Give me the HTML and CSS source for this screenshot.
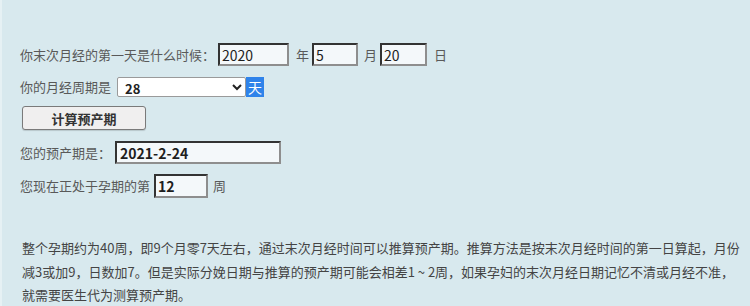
FILE: index.html
```html
<!DOCTYPE html>
<html lang="zh-CN">
<head>
<meta charset="utf-8">
<title>预产期计算</title>
<link rel="stylesheet" href="styles.css">
</head>
<body>
<div class="page">
  <div class="row row-date">
    <span class="label">你末次月经的第一天是什么时候：</span>
    <input class="field f-year" type="text" value="2020">
    <span class="unit u-year">年</span>
    <input class="field f-month" type="text" value="5">
    <span class="unit u-month">月</span>
    <input class="field f-day" type="text" value="20">
    <span class="unit u-day">日</span>
  </div>
  <div class="row row-cycle">
    <span class="label">你的月经周期是</span>
    <select class="cycle">
      <option>28</option>
    </select><span class="sel-unit">天</span>
  </div>
  <div class="row row-btn">
    <button class="calc" type="button">计算预产期</button>
  </div>
  <div class="row row-result">
    <span class="label">您的预产期是：</span>
    <input class="field f-result strong" type="text" value="2021-2-24">
  </div>
  <div class="row row-week">
    <span class="label">您现在正处于孕期的第</span>
    <input class="field f-week strong" type="text" value="12">
    <span class="unit u-week">周</span>
  </div>
  <p class="note">整个孕期约为40周，即9个月零7天左右，通过末次月经时间可以推算预产期。推算方法是按末次月经时间的第一日算起，月份减3或加9，日数加7。但是实际分娩日期与推算的预产期可能会相差1 ~ 2周，如果孕妇的末次月经日期记忆不清或月经不准，就需要医生代为测算预产期。</p>
</div>
</body>
</html>
```
FILE: styles.css
```css
html, body {
  margin: 0;
  padding: 0;
}
body {
  background: #d8e9ee;
  font-family: "Noto Sans CJK SC", "Noto Sans", sans-serif;
  color: #555;
  width: 750px;
  height: 306px;
  overflow: hidden;
  border-left: 2px solid #e6f1f4;
  box-sizing: border-box;
}
.page {
  padding: 43px 0 0 18px;
}
.row {
  display: flex;
  align-items: center;
}
.label {
  font-size: 13px;
  line-height: 20px;
  color: #595959;
}
.unit {
  font-size: 13px;
  line-height: 20px;
  color: #595959;
}
.field {
  box-sizing: border-box;
  height: 23px;
  margin: 0;
  padding: 0 0 0 2px;
  background: #f4f8fa;
  border-style: solid;
  border-width: 2px;
  border-color: #333 #8e8e8e #8e8e8e #333;
  font-family: "Noto Sans CJK SC", "Noto Sans", sans-serif;
  font-size: 14px;
  color: #1e1e1e;
  outline: none;
}
.strong {
  font-weight: bold;
}
.row-date {
  height: 23px;
}
.f-year {
  width: 71px;
  margin-left: 3px;
}
.u-year {
  margin-left: 7px;
}
.f-month {
  width: 46px;
  margin-left: 3px;
}
.u-month {
  margin-left: 6px;
}
.f-day {
  width: 47px;
  margin-left: 3px;
}
.u-day {
  margin-left: 7px;
}
.row-cycle {
  margin-top: 11px;
  height: 20px;
}
.cycle {
  box-sizing: border-box;
  width: 129px;
  height: 20px;
  margin: 0 0 0 6px;
  padding: 0 2px 0 3px;
  border: 1px solid #9a9a9a;
  border-radius: 2px;
  background: #fff;
  font-family: "Noto Sans CJK SC", "Noto Sans", sans-serif;
  font-size: 13px;
  font-weight: bold;
  color: #222;
}
.sel-unit {
  display: inline-block;
  height: 20px;
  line-height: 20px;
  width: 18px;
  text-align: center;
  background: #2f83ea;
  color: #fff;
  font-size: 14px;
}
.row-btn {
  margin-top: 9px;
}
.calc {
  box-sizing: border-box;
  width: 124px;
  height: 24px;
  margin: 0 0 0 2px;
  padding: 0;
  background: #f0efef;
  border: 1px solid #7a7a7a;
  border-radius: 3px;
  box-shadow: 0 1px 1px rgba(0, 0, 0, 0.15);
  font-family: "Noto Sans CJK SC", "Noto Sans", sans-serif;
  font-size: 13px;
  font-weight: bold;
  color: #333;
}
.row-result {
  margin-top: 11px;
}
.f-result {
  width: 166px;
  margin-left: 4px;
  padding-left: 3px;
}
.row-week {
  margin-top: 10px;
}
.f-week {
  width: 54px;
  height: 24px;
  margin-left: 4px;
}
.u-week {
  margin-left: 5px;
}
.note {
  margin: 38px 0 0 2px;
  width: 722px;
  font-size: 13px;
  line-height: 23.5px;
  color: #444;
}
```
